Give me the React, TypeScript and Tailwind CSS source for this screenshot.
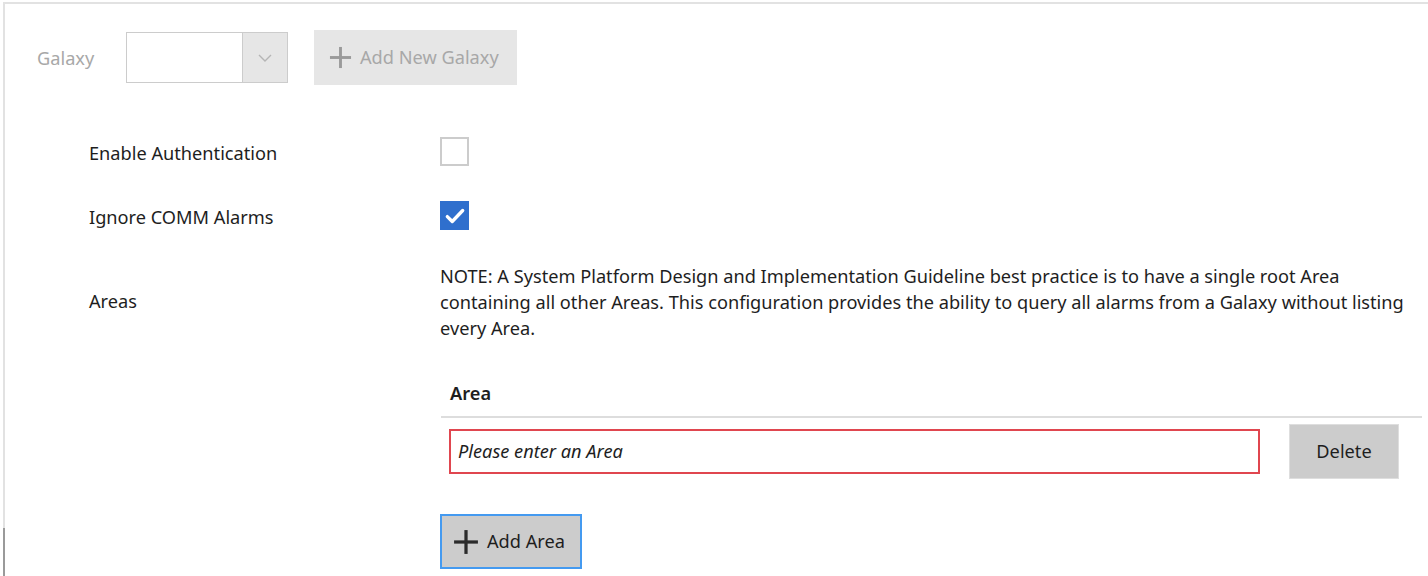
import React from "react";

function Plus({ className }: { className?: string }) {
  return (
    <svg viewBox="0 0 24 24" className={className} fill="currentColor">
      <rect x="10.5" y="1" width="3" height="22" />
      <rect x="1" y="10.5" width="22" height="3" />
    </svg>
  );
}

function Chevron() {
  return (
    <svg viewBox="0 0 14 8" className="w-[14px] h-[8px]" fill="none" stroke="#b5b5b5" strokeWidth="1.4">
      <path d="M1 1l6 6 6-6" />
    </svg>
  );
}

function Row({ label, nudge, children }: { label: string; nudge?: boolean; children: React.ReactNode }) {
  return (
    <div className="flex items-center">
      <div className={"w-[435px] pl-[84px] text-[#1e1e1e] " + (nudge ? "pt-[3px] leading-[26px]" : "")}>{label}</div>
      <div className="flex-1">{children}</div>
    </div>
  );
}

export default function App() {
  return (
    <div
      className="relative w-[1428px] h-[576px] bg-white overflow-hidden pt-[2px] pl-[3px] text-[18.2px]"
      style={{ fontFamily: '"Noto Sans", "Open Sans", sans-serif' }}
    >
      <div className="h-full border-t-2 border-l-2 border-[#e2e2e2]">
        {/* galaxy selector */}
        <div className="flex items-center mt-[26px] pl-[32px]">
          <span className="w-[89px] pt-[2px] text-[#a8a8a8]">Galaxy</span>
          <div className="flex h-[51px] w-[162px] border border-[#cccccc]">
            <div className="flex-1 bg-white" />
            <div className="w-[45px] flex items-center justify-center bg-[#e6e6e6] border-l border-[#cccccc]">
              <Chevron />
            </div>
          </div>
          <button className="ml-[26px] flex items-center gap-[8px] h-[55px] w-[203px] pl-[15px] bg-[#e6e6e6] text-[#a8a8a8]">
            <Plus className="w-[23px] h-[23px] text-[#9a9a9a]" />
            <span>Add New Galaxy</span>
          </button>
        </div>

        <div className="mt-[52px] flex flex-col">
          <Row label="Enable Authentication" nudge>
            <div className="w-[29px] h-[29px] border-2 border-[#cccccc] bg-white" />
          </Row>
          <div className="h-[35px]" />
          <Row label="Ignore COMM Alarms" nudge>
            <div className="w-[29px] h-[29px] bg-[#2f6fcd] flex items-center justify-center">
              <svg viewBox="0 0 20 20" className="w-[22px] h-[22px]" fill="none" stroke="white" strokeWidth="3" strokeLinecap="round" strokeLinejoin="round">
                <path d="M3 10.5l4.5 4.5L17 5" />
              </svg>
            </div>
          </Row>
          <div className="h-[33px]" />
          <Row label="Areas">
            <p className="leading-[26px] text-[#1e1e1e] whitespace-nowrap">
              NOTE: A System Platform Design and Implementation Guideline best practice is to have a single root Area
              <br />
              containing all other Areas. This configuration provides the ability to query all alarms from a Galaxy without listing
              <br />
              every Area.
            </p>
          </Row>

          <div className="ml-[436px] mr-[6px] mt-[40px]">
            <div className="pl-[9px] pb-[10px] leading-[25px] font-semibold text-[#1e1e1e] border-b-2 border-[#dddddd]">Area</div>
            <div className="flex items-center mt-[6px] pl-[8px] pr-[23px]">
              <div className="flex-1 h-[45px] border-2 border-[#e0464f] flex items-center pl-[7px] italic text-[#1e1e1e]">
                Please enter an Area
              </div>
              <button className="ml-[29px] h-[55px] w-[110px] bg-[#cccccc] border border-[#dedede] text-[#1e1e1e]">
                Delete
              </button>
            </div>
            <button className="mt-[35px] -ml-px flex items-center gap-[8px] h-[55px] w-[142px] pl-[11px] bg-[#cccccc] border-2 border-[#449af0] text-[#1e1e1e]">
              <Plus className="w-[26px] h-[26px] text-[#2b2b2b]" />
              <span>Add Area</span>
            </button>
          </div>
        </div>
      </div>
      <div className="absolute left-[3px] top-[528px] w-[2px] h-[48px] bg-[#9a9a9a]" />
    </div>
  );
}
